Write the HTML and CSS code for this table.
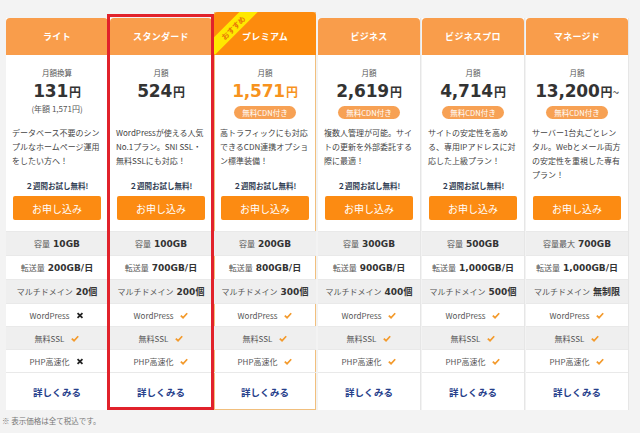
FILE: index.html
```html
<!DOCTYPE html>
<html lang="ja">
<head>
<meta charset="utf-8">
<title>料金プラン</title>
<link rel="stylesheet" href="styles.css">
</head>
<body>
<div class="plans">
  <div class="card">
    <div class="head">ライト</div>
    <div class="label">月額換算</div>
    <div class="price">131<span class="yen">円</span></div>
    <div class="sub"><span class="annual">(年額 1,571円)</span></div>
    <div class="desc">データベース不要のシン<br>プルなホームページ運用<br>をしたい方へ！</div>
    <div class="trial">２週間お試し無料!</div>
    <div class="btn">お申し込み</div>
    <div class="specs">
      <div class="row g"><span class="k">容量</span><b>10GB</b></div>
      <div class="row"><span class="k">転送量</span><b>200GB/日</b></div>
      <div class="row g"><span class="k">マルチドメイン</span><b>20個</b></div>
      <div class="row"><span class="k">WordPress</span><svg class="ic" viewBox="0 0 8 8"><path d="M1.2 1.2L6.8 6.8M6.8 1.2L1.2 6.8" stroke="#222" stroke-width="2"/></svg></div>
      <div class="row g"><span class="k">無料SSL</span><svg class="ic" viewBox="0 0 10 8"><path d="M1 4.2L3.8 6.8L9 1.2" fill="none" stroke="#f39a2c" stroke-width="2.2"/></svg></div>
      <div class="row"><span class="k">PHP高速化</span><svg class="ic" viewBox="0 0 8 8"><path d="M1.2 1.2L6.8 6.8M6.8 1.2L1.2 6.8" stroke="#222" stroke-width="2"/></svg></div>
      <div class="more">詳しくみる</div>
    </div>
  </div>

  <div class="card marked">
    <div class="head">スタンダード</div>
    <div class="label">月額</div>
    <div class="price">524<span class="yen">円</span></div>
    <div class="sub"></div>
    <div class="desc">WordPressが使える人気<br>No.1プラン。SNI SSL・<br>無料SSLにも対応！</div>
    <div class="trial">２週間お試し無料!</div>
    <div class="btn">お申し込み</div>
    <div class="specs">
      <div class="row g"><span class="k">容量</span><b>100GB</b></div>
      <div class="row"><span class="k">転送量</span><b>700GB/日</b></div>
      <div class="row g"><span class="k">マルチドメイン</span><b>200個</b></div>
      <div class="row"><span class="k">WordPress</span><svg class="ic" viewBox="0 0 10 8"><path d="M1 4.2L3.8 6.8L9 1.2" fill="none" stroke="#f39a2c" stroke-width="2.2"/></svg></div>
      <div class="row g"><span class="k">無料SSL</span><svg class="ic" viewBox="0 0 10 8"><path d="M1 4.2L3.8 6.8L9 1.2" fill="none" stroke="#f39a2c" stroke-width="2.2"/></svg></div>
      <div class="row"><span class="k">PHP高速化</span><svg class="ic" viewBox="0 0 10 8"><path d="M1 4.2L3.8 6.8L9 1.2" fill="none" stroke="#f39a2c" stroke-width="2.2"/></svg></div>
      <div class="more">詳しくみる</div>
    </div>
  </div>

  <div class="card premium">
    <div class="head"><span class="ribbon">おすすめ</span>プレミアム</div>
    <div class="label">月額</div>
    <div class="price">1,571<span class="yen">円</span></div>
    <div class="sub"><span class="pill">無料CDN付き</span></div>
    <div class="desc">高トラフィックにも対応<br>できるCDN連携オプショ<br>ン標準装備！</div>
    <div class="trial">２週間お試し無料!</div>
    <div class="btn">お申し込み</div>
    <div class="specs">
      <div class="row g"><span class="k">容量</span><b>200GB</b></div>
      <div class="row"><span class="k">転送量</span><b>800GB/日</b></div>
      <div class="row g"><span class="k">マルチドメイン</span><b>300個</b></div>
      <div class="row"><span class="k">WordPress</span><svg class="ic" viewBox="0 0 10 8"><path d="M1 4.2L3.8 6.8L9 1.2" fill="none" stroke="#f39a2c" stroke-width="2.2"/></svg></div>
      <div class="row g"><span class="k">無料SSL</span><svg class="ic" viewBox="0 0 10 8"><path d="M1 4.2L3.8 6.8L9 1.2" fill="none" stroke="#f39a2c" stroke-width="2.2"/></svg></div>
      <div class="row"><span class="k">PHP高速化</span><svg class="ic" viewBox="0 0 10 8"><path d="M1 4.2L3.8 6.8L9 1.2" fill="none" stroke="#f39a2c" stroke-width="2.2"/></svg></div>
      <div class="more">詳しくみる</div>
    </div>
  </div>

  <div class="card">
    <div class="head">ビジネス</div>
    <div class="label">月額</div>
    <div class="price">2,619<span class="yen">円</span></div>
    <div class="sub"><span class="pill">無料CDN付き</span></div>
    <div class="desc">複数人管理が可能。サイ<br>トの更新を外部委託する<br>際に最適！</div>
    <div class="trial">２週間お試し無料!</div>
    <div class="btn">お申し込み</div>
    <div class="specs">
      <div class="row g"><span class="k">容量</span><b>300GB</b></div>
      <div class="row"><span class="k">転送量</span><b>900GB/日</b></div>
      <div class="row g"><span class="k">マルチドメイン</span><b>400個</b></div>
      <div class="row"><span class="k">WordPress</span><svg class="ic" viewBox="0 0 10 8"><path d="M1 4.2L3.8 6.8L9 1.2" fill="none" stroke="#f39a2c" stroke-width="2.2"/></svg></div>
      <div class="row g"><span class="k">無料SSL</span><svg class="ic" viewBox="0 0 10 8"><path d="M1 4.2L3.8 6.8L9 1.2" fill="none" stroke="#f39a2c" stroke-width="2.2"/></svg></div>
      <div class="row"><span class="k">PHP高速化</span><svg class="ic" viewBox="0 0 10 8"><path d="M1 4.2L3.8 6.8L9 1.2" fill="none" stroke="#f39a2c" stroke-width="2.2"/></svg></div>
      <div class="more">詳しくみる</div>
    </div>
  </div>

  <div class="card">
    <div class="head">ビジネスプロ</div>
    <div class="label">月額</div>
    <div class="price">4,714<span class="yen">円</span></div>
    <div class="sub"><span class="pill">無料CDN付き</span></div>
    <div class="desc">サイトの安定性を高め<br>る、専用IPアドレスに対<br>応した上級プラン！</div>
    <div class="trial">２週間お試し無料!</div>
    <div class="btn">お申し込み</div>
    <div class="specs">
      <div class="row g"><span class="k">容量</span><b>500GB</b></div>
      <div class="row"><span class="k">転送量</span><b>1,000GB/日</b></div>
      <div class="row g"><span class="k">マルチドメイン</span><b>500個</b></div>
      <div class="row"><span class="k">WordPress</span><svg class="ic" viewBox="0 0 10 8"><path d="M1 4.2L3.8 6.8L9 1.2" fill="none" stroke="#f39a2c" stroke-width="2.2"/></svg></div>
      <div class="row g"><span class="k">無料SSL</span><svg class="ic" viewBox="0 0 10 8"><path d="M1 4.2L3.8 6.8L9 1.2" fill="none" stroke="#f39a2c" stroke-width="2.2"/></svg></div>
      <div class="row"><span class="k">PHP高速化</span><svg class="ic" viewBox="0 0 10 8"><path d="M1 4.2L3.8 6.8L9 1.2" fill="none" stroke="#f39a2c" stroke-width="2.2"/></svg></div>
      <div class="more">詳しくみる</div>
    </div>
  </div>

  <div class="card">
    <div class="head">マネージド</div>
    <div class="label">月額</div>
    <div class="price">13,200<span class="yen">円</span><span class="tilde">~</span></div>
    <div class="sub"><span class="pill">無料CDN付き</span></div>
    <div class="desc">サーバー1台丸ごとレン<br>タル。Webとメール両方<br>の安定性を重視した専有<br>プラン！</div>
    <div class="trial"></div>
    <div class="btn">お申し込み</div>
    <div class="specs">
      <div class="row g"><span class="k">容量最大</span><b>700GB</b></div>
      <div class="row"><span class="k">転送量</span><b>1,000GB/日</b></div>
      <div class="row g"><span class="k">マルチドメイン</span><b>無制限</b></div>
      <div class="row"><span class="k">WordPress</span><svg class="ic" viewBox="0 0 10 8"><path d="M1 4.2L3.8 6.8L9 1.2" fill="none" stroke="#f39a2c" stroke-width="2.2"/></svg></div>
      <div class="row g"><span class="k">無料SSL</span><svg class="ic" viewBox="0 0 10 8"><path d="M1 4.2L3.8 6.8L9 1.2" fill="none" stroke="#f39a2c" stroke-width="2.2"/></svg></div>
      <div class="row"><span class="k">PHP高速化</span><svg class="ic" viewBox="0 0 10 8"><path d="M1 4.2L3.8 6.8L9 1.2" fill="none" stroke="#f39a2c" stroke-width="2.2"/></svg></div>
      <div class="more">詳しくみる</div>
    </div>
  </div>
</div>
<p class="note">※ 表示価格は全て税込です。</p>
</body>
</html>
```
FILE: styles.css
```css
html, body {
  margin: 0;
  padding: 0;
}
body {
  background: #f3f3f3;
  font-family: "Noto Sans CJK JP", "Noto Sans", sans-serif;
  color: #444;
  width: 640px;
  height: 433px;
  overflow: hidden;
}
.plans {
  display: grid;
  grid-template-columns: repeat(6, 102px);
  column-gap: 2px;
  padding: 12px 0 0 6px;
  align-items: stretch;
}
.card {
  position: relative;
  background: #fff;
  margin-top: 6px;
  display: flex;
  flex-direction: column;
  box-shadow: 1px 0 0 #e6e6e6;
}
.card.premium {
  margin-top: 0;
  box-shadow: inset 0 0 0 1px #f1bf7d;
}
.card.marked::after {
  content: "";
  position: absolute;
  top: -4px;
  left: -3px;
  right: -2px;
  bottom: 0;
  border: 3px solid #e1222b;
  z-index: 3;
}
.head {
  position: relative;
  overflow: hidden;
  height: 37px;
  background: #f99d4b;
  color: #fff;
  border-radius: 4px 4px 0 0;
  font-size: 9px;
  font-weight: bold;
  display: flex;
  align-items: center;
  justify-content: center;
  letter-spacing: 0.3px;
}
.premium .head {
  height: 43px;
  padding-top: 6px;
  box-sizing: border-box;
  background: #fd8b0d;
}
.ribbon {
  position: absolute;
  left: -13px;
  top: 9px;
  width: 64px;
  height: 13px;
  line-height: 13px;
  background: #ffe800;
  color: #e8760a;
  font-size: 7.5px;
  font-weight: bold;
  text-align: center;
  transform: rotate(-45deg);
  letter-spacing: 0;
}
.label {
  margin-top: 13px;
  height: 10px;
  line-height: 10px;
  font-size: 7.5px;
  color: #555;
  text-align: center;
}
.price {
  height: 26px;
  line-height: 26px;
  text-align: center;
  font-family: "DejaVu Sans", sans-serif;
  font-weight: bold;
  font-size: 17px;
  color: #333;
  letter-spacing: -0.2px;
}
.premium .price {
  color: #f7931e;
}
.yen {
  font-family: "Noto Sans CJK JP", sans-serif;
  font-size: 12px;
  margin-left: 1px;
}
.tilde {
  font-family: "Noto Sans CJK JP", sans-serif;
  font-size: 12px;
  font-weight: normal;
}
.sub {
  height: 16px;
  display: flex;
  justify-content: center;
  align-items: flex-start;
}
.annual {
  font-size: 8px;
  line-height: 10px;
  color: #555;
}
.pill {
  margin-top: 2px;
  width: 62px;
  height: 13px;
  line-height: 13px;
  border-radius: 7px;
  background: #f7a154;
  color: #fff;
  font-size: 7.5px;
  text-align: center;
}
.desc {
  margin-top: 6px;
  height: 55px;
  padding: 0 6px;
  font-size: 8px;
  line-height: 14px;
  color: #444;
  white-space: nowrap;
}
.trial {
  height: 10px;
  line-height: 10px;
  font-size: 7.5px;
  font-weight: bold;
  color: #2f3c52;
  text-align: center;
}
.btn {
  margin: 5px 7px 0 7px;
  height: 24px;
  background: #fc8b12;
  color: #fff;
  border-radius: 2px;
  font-size: 10px;
  display: flex;
  align-items: center;
  justify-content: center;
}
.specs {
  margin-top: 11px;
}
.row {
  height: 24px;
  display: flex;
  align-items: center;
  justify-content: center;
  gap: 3px;
  border-top: 1px solid #e9e9e9;
  box-sizing: border-box;
}
.row:nth-child(n+4) {
  height: 23px;
}
.row.g {
  background: #efefef;
}
.k {
  font-size: 8px;
  color: #555;
}
.row b {
  font-family: "DejaVu Sans", "Noto Sans CJK JP", sans-serif;
  font-size: 9px;
  font-weight: bold;
  color: #333;
}
.ic {
  width: 8px;
  height: 7px;
  margin-left: 4px;
}
.more {
  height: 38px;
  border-top: 1px solid #e9e9e9;
  box-sizing: border-box;
  display: flex;
  align-items: center;
  justify-content: center;
  font-size: 9.5px;
  font-weight: bold;
  color: #27408b;
}
.note {
  margin: 5px 0 0 2px;
  font-size: 7.5px;
  color: #777;
}
```
